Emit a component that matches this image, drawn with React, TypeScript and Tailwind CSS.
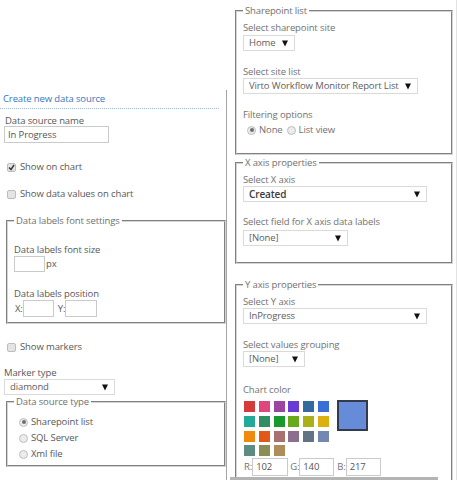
import React from "react";

const swatches = [
  "#d43b3b", "#e0457d", "#9b45a3", "#6a3bd4", "#336b9e", "#3a6fd8",
  "#23a99a", "#2f8f63", "#1a9a2a", "#67ab1a", "#aab01a", "#dcb00f",
  "#ef8a0c", "#e35817", "#a8706e", "#8c6f8e", "#627386", "#7388b0",
  "#5e8c82", "#8c8c55", "#b08c5a",
];

const Arrow = () => (
  <svg width="6" height="7" viewBox="0 0 6 7" className="shrink-0">
    <polygon points="0,0.5 6,0.5 3,6.5" fill="#111" />
  </svg>
);

const Select = ({ text, w, bold = false }: { text: string; w: string; bold?: boolean }) => (
  <div className={`${w} h-[16px] border border-[#dadada] bg-white flex items-center justify-between pl-[5px] pr-[6px]`}>
    <span className={bold ? "text-[#3a3a3a] font-semibold text-[10px]" : "text-[#606060]"}>{text}</span>
    <Arrow />
  </div>
);

const Box = ({ w, h = "h-[17px]", text = "" }: { w: string; h?: string; text?: string }) => (
  <div className={`${w} ${h} border border-[#cacaca] bg-white flex items-center pl-[3px] text-[#555]`}>{text}</div>
);

const Check = ({ checked = false }: { checked?: boolean }) => (
  <span className="w-[9px] h-[9px] rounded-[2px] border border-[#bdbdbd] bg-[#e4e4e4] flex items-center justify-center shrink-0">
    {checked && (
      <svg width="7" height="7" viewBox="0 0 7 7">
        <path d="M1 3.5 L3 5.5 L6 1" stroke="#3a3a3a" strokeWidth="1.5" fill="none" />
      </svg>
    )}
  </span>
);

const Radio = ({ on = false }: { on?: boolean }) => (
  <span className="w-[9px] h-[9px] rounded-full border border-[#bdbdbd] bg-[#ececec] flex items-center justify-center shrink-0">
    {on && <span className="w-[4px] h-[4px] rounded-full bg-[#6e6e6e]" />}
  </span>
);

const Fieldset = ({ title, className, children }: { title: string; className: string; children: React.ReactNode }) => (
  <fieldset className={`border-2 [border-style:groove] border-[#d4d4d4] px-[6px] ${className}`}>
    <legend className="px-[2px] leading-[12px] text-[#707070]">{title}</legend>
    {children}
  </fieldset>
);

const App = () => {
  return (
    <div className="flex w-[457px] h-[480px] overflow-hidden bg-white font-['Open_Sans',sans-serif] text-[9.5px] leading-[12px] tracking-[-0.12px]">
      {/* left: data source */}
      <div className="w-[227px] shrink-0 mt-[90px] border-r border-[#a4a4a4] text-[#585858]">
        <div className="pt-[3px] pl-[3px] pb-[3px] w-[219px] border-b border-dotted border-[#9dbbe3] text-[#3576c0]">
          Create new data source
        </div>
        <div className="pl-[5px] mt-[6px] leading-[11px]">Data source name</div>
        <div className="pl-[4px]">
          <Box w="w-[105px]" text="In Progress" />
        </div>
        <div className="flex items-center gap-[4px] pl-[7px] mt-[18px]">
          <Check checked />
          <span>Show on chart</span>
        </div>
        <div className="flex items-center gap-[4px] pl-[7px] mt-[15px]">
          <Check />
          <span>Show data values on chart</span>
        </div>
        <Fieldset title="Data labels font settings" className="ml-[6px] mt-[15px] pb-[5px]">
          <div className="mt-[17px]">Data labels font size</div>
          <div className="flex items-center">
            <Box w="w-[31px]" h="h-[16px]" />
            <span className="ml-[1px]">px</span>
          </div>
          <div className="mt-[16px]">Data labels position</div>
          <div className="flex items-center">
            <span className="ml-[1px]">X:</span>
            <Box w="w-[31px]" />
            <span className="ml-[4px]">Y:</span>
            <Box w="w-[32px]" />
          </div>
        </Fieldset>
        <div className="flex items-center gap-[4px] pl-[7px] mt-[17px]">
          <Check />
          <span>Show markers</span>
        </div>
        <div className="pl-[4px] mt-[14px]">Marker type</div>
        <div className="pl-[4px]">
          <Select text="diamond" w="w-[111px]" />
        </div>
        <Fieldset title="Data source type" className="ml-[6px] mt-[1px] pb-[3px]">
          <div className="pl-[5px] mt-[6px]">
            {["Sharepoint list", "SQL Server", "Xml file"].map((t, i) => (
              <div key={t} className="flex items-center gap-[3px] h-[16px]">
                <Radio on={i === 0} />
                <span>{t}</span>
              </div>
            ))}
          </div>
        </Fieldset>
      </div>

      {/* right: source settings */}
      <div className="w-[230px] shrink-0 pl-[8px] pr-[3px] border-r border-[#e2e2e2] text-[#727272]">
        <Fieldset title="Sharepoint list" className="mt-[5px] pb-[17px]">
          <div className="mt-[5px]">Select sharepoint site</div>
          <div className="mt-[1px]">
            <Select text="Home" w="w-[52px]" />
          </div>
          <div className="mt-[15px]">Select site list</div>
          <Select text="Virto Workflow Monitor Report List" w="w-[175px]" />
          <div className="mt-[15px]">Filtering options</div>
          <div className="flex items-center mt-[3px] pl-[4px]">
            <Radio on />
            <span className="ml-[3px]">None</span>
            <span className="ml-[4px]"><Radio /></span>
            <span className="ml-[3px]">List view</span>
          </div>
        </Fieldset>

        <Fieldset title="X axis properties" className="mt-[2px] pb-[16px]">
          <div className="mt-[5px]">Select X axis</div>
          <Select text="Created" w="w-[184px]" bold />
          <div className="mt-[14px]">Select field for X axis data labels</div>
          <div className="mt-[2px]">
            <Select text="[None]" w="w-[105px]" />
          </div>
        </Fieldset>

        <Fieldset title="Y axis properties" className="mt-[15px] pb-[20px]">
          <div className="mt-[5px]">Select Y axis</div>
          <Select text="InProgress" w="w-[184px]" />
          <div className="mt-[15px]">Select values grouping</div>
          <Select text="[None]" w="w-[62px]" />
          <div className="mt-[17px]">Chart color</div>
          <div className="flex items-start mt-[5px] pl-[1px]">
            <div className="grid grid-cols-6 gap-[3.8px] w-[85px]">
              {swatches.map((c) => (
                <span key={c} className="w-[11px] h-[11px] block" style={{ backgroundColor: c }} />
              ))}
            </div>
            <div className="ml-[8px] -mt-[1px] w-[31px] h-[31px] border-2 border-[#333a4c] bg-[#668cd9]" />
          </div>
          <div className="flex items-center mt-[2px] pl-[1px]">
            <span>R:</span>
            <Box w="w-[36px]" h="h-[18px]" text="102" />
            <span className="ml-[2px]">G:</span>
            <Box w="w-[35px]" h="h-[18px]" text="140" />
            <span className="ml-[3px]">B:</span>
            <Box w="w-[35px]" h="h-[18px]" text="217" />
          </div>
        </Fieldset>
      </div>
      <div className="fixed bottom-0 left-[230px] w-[208px] h-[3px] bg-[#b4b4b4]" />
    </div>
  );
};

export default App;
